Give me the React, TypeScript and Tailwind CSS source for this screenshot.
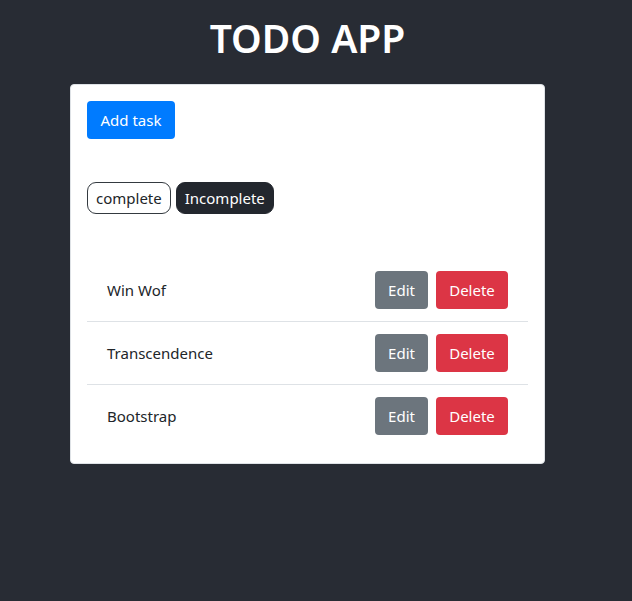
const tasks = ["Win Wof", "Transcendence", "Bootstrap"];

export default function App() {
  return (
    <div
      className="min-h-screen bg-[#282c34] text-[#212529]"
      style={{ fontFamily: '"Noto Sans", "Open Sans", sans-serif' }}
    >
      <div className="w-[615px] flex flex-col items-center">
        <h1 className="mt-[14px] mb-[22px] text-[39px] leading-[48px] font-semibold text-white">TODO APP</h1>
        <div className="w-[475px] bg-white rounded border border-[#dee2e6] p-4">
          <button className="h-[38px] w-[88px] rounded bg-[#007bff] text-white text-[15px] leading-6">
            Add task
          </button>
          <div className="mt-[43px] flex gap-[5px]">
            <button className="h-8 px-2 rounded-[9px] border border-[#343a40] bg-white text-[15px]">
              complete
            </button>
            <button className="h-8 px-2 rounded-[9px] border border-[#23272e] bg-[#23272e] text-white text-[15px]">
              Incomplete
            </button>
          </div>
          <ul className="mt-[45px]">
            {tasks.map((t, i) => (
              <li
                key={t}
                className={
                  "flex items-center justify-between px-5 py-3" +
                  (i < tasks.length - 1 ? " border-b border-[#dee2e6]" : "")
                }
              >
                <span className="text-[15px]">{t}</span>
                <div className="flex gap-2">
                  <button className="h-[38px] w-[53px] rounded bg-[#6c757d] text-white text-[15px]">Edit</button>
                  <button className="h-[38px] w-[72px] rounded bg-[#dc3545] text-white text-[15px]">Delete</button>
                </div>
              </li>
            ))}
          </ul>
        </div>
      </div>
    </div>
  );
}
